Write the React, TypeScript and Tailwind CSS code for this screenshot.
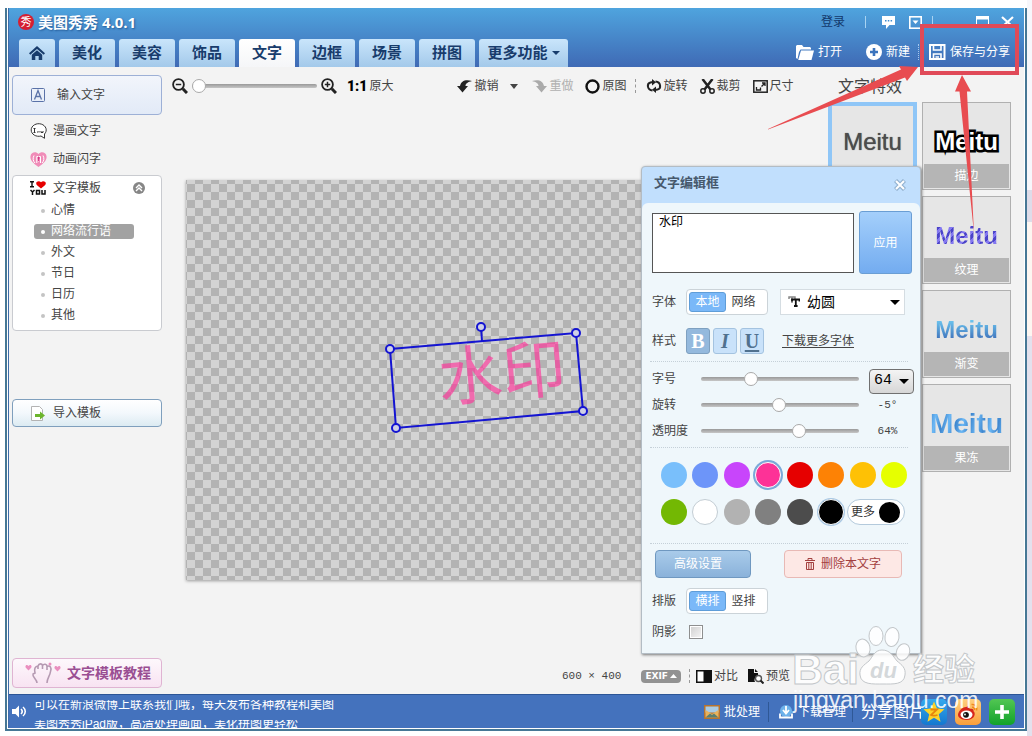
import React from "react";
import clsx from "clsx";

const tabs = ["美化", "美容", "饰品", "文字", "边框", "场景", "拼图"];
const templates = ["心情", "网络流行语", "外文", "节日", "日历", "其他"];

const swatches = [
  { name: "天蓝", cls: "bg-[#79bffb]" },
  { name: "蓝", cls: "bg-[#6d95f9]" },
  { name: "紫", cls: "bg-[#c845fb]" },
  { name: "粉", cls: "bg-[#fd3297] border border-white ring-2 ring-[#7aa9d8]" },
  { name: "红", cls: "bg-[#e60000]" },
  { name: "橙", cls: "bg-[#fd8205]" },
  { name: "琥珀", cls: "bg-[#fec105]" },
  { name: "黄", cls: "bg-[#e6ff00]" },
  { name: "绿", cls: "bg-[#73b803]" },
  { name: "白", cls: "bg-white border border-[#c3cdd4]" },
  { name: "浅灰", cls: "bg-[#b2b2b2]" },
  { name: "灰", cls: "bg-[#808080]" },
  { name: "深灰", cls: "bg-[#4c4c4c]" },
  { name: "黑", cls: "bg-black border border-white ring-1 ring-[#a9c8e4]" },
];

const effects = [
  {
    name: "描边",
    cls: "text-2xl font-bold text-white [-webkit-text-stroke:5px_#000] [paint-order:stroke_fill] [stroke-linejoin:round]",
  },
  {
    name: "纹理",
    cls: "text-2xl font-bold text-transparent bg-clip-text bg-[repeating-linear-gradient(135deg,#4b43c9_0px,#4b43c9_3px,#8377f0_3px,#8377f0_6px)]",
  },
  {
    name: "渐变",
    cls: "text-2xl font-bold text-transparent bg-clip-text bg-[linear-gradient(180deg,#6cc4ee_20%,#3f72bb_80%)]",
  },
  {
    name: "果冻",
    cls: "text-[28px] font-bold text-transparent bg-clip-text bg-[repeating-linear-gradient(100deg,#3f87cf_0px,#6cb8f5_7px,#3f87cf_14px)]",
  },
];

const rangeBase =
  "appearance-none bg-transparent h-4 [&::-webkit-slider-runnable-track]:h-1 [&::-webkit-slider-runnable-track]:rounded-full [&::-webkit-slider-runnable-track]:bg-[linear-gradient(#999,#c6c6c6)] [&::-webkit-slider-thumb]:appearance-none [&::-webkit-slider-thumb]:size-3.5 [&::-webkit-slider-thumb]:-mt-[5px] [&::-webkit-slider-thumb]:rounded-full [&::-webkit-slider-thumb]:bg-white [&::-webkit-slider-thumb]:border [&::-webkit-slider-thumb]:border-[#a9a9a9]";

function Magnifier({ plus }: { plus?: boolean }) {
  return (
    <svg width="16" height="16" viewBox="0 0 16 16" fill="none" stroke="#222">
      <circle cx="6.5" cy="6.5" r="5.4" strokeWidth="1.8" />
      <path d="M10.8 10.8 15 15" strokeWidth="3" />
      <path d={plus ? "M3.8 6.5h5.4M6.5 3.8v5.4" : "M3.8 6.5h5.4"} strokeWidth="1.5" />
    </svg>
  );
}

function Dots() {
  return <span className="h-3.5 border-l border-dashed border-[#999]" />;
}

function Header() {
  return (
    <header className="bg-[linear-gradient(#4fa4de,#3f6ab5)] text-white">
      <div className="flex h-7 items-center pl-[9px]">
        <svg width="16" height="16" viewBox="0 0 16 16">
          <circle cx="8" cy="8" r="8" fill="#d51f32" />
          <text x="8" y="12" fontSize="11" textAnchor="middle" fill="#fff">秀</text>
        </svg>
        <h1 className="ml-1 font-['Open_Sans','Noto_Sans_CJK_SC',sans-serif] text-[15px] leading-5 font-bold [text-shadow:1px_1px_2px_#245a96]">
          美图秀秀 4.0.1
        </h1>
        <div className="ml-auto flex items-center pr-2.5">
          <a href="#login" className="text-[#12386b]">登录</a>
          <span className="ml-5 h-3 w-px bg-[#a8d3f2]" />
          <button aria-label="消息" className="ml-4">
            <svg width="13" height="13" viewBox="0 0 13 13">
              <path d="M0 0h13v9H7.500L4 13V9H0z" fill="#fff" />
              <path d="M3 4h1.500v1.500H3zM5.800 4h1.500v1.500H5.800zM8.600 4h1.500v1.500H8.600z" fill="#3f8cce" />
            </svg>
          </button>
          <button aria-label="菜单" className="ml-3.5">
            <svg width="13" height="13" viewBox="0 0 13 13" fill="none" stroke="#fff" strokeWidth="1.6">
              <rect x=".8" y=".8" width="11.400" height="11.400" />
              <path d="M3.500 4.500h6L6.500 8z" fill="#fff" stroke="none" />
            </svg>
          </button>
          <span className="ml-2.5 h-3 w-px bg-[#a8d3f2]" />
          <button aria-label="最大化" className="ml-[43px]">
            <svg width="13" height="12" viewBox="0 0 13 12" fill="none" stroke="#fff">
              <rect x=".5" y=".5" width="12" height="11" />
              <path d="M0 2h13" strokeWidth="3" />
            </svg>
          </button>
          <button aria-label="关闭" className="ml-3">
            <svg width="13" height="12" viewBox="0 0 13 12" stroke="#fff" strokeWidth="2.200">
              <path d="M1 1l11 10M12 1L1 11" />
            </svg>
          </button>
        </div>
      </div>
      <div className="flex h-[31px] items-end pl-2.5">
        <nav className="flex gap-1 text-[15px] font-bold text-[#183c6c]">
          <button aria-label="首页" className="flex h-7 w-9 items-center justify-center rounded-t-[3px] bg-[linear-gradient(#c9e5fb,#a3c9ea)]">
            <svg width="16" height="15" viewBox="0 0 16 15" fill="#183c6c">
              <path d="M8 0l8 7.200-1.300 1.500L8 2.900 1.300 8.700 0 7.200z" />
              <path d="M8 4.200l5.200 4.500V14H9.700v-4H6.300v4H2.800V8.700z" />
            </svg>
          </button>
          {tabs.map((t) => (
            <button
              key={t}
              className={clsx(
                "h-7 w-14 rounded-t-[3px]",
                t === "文字" ? "bg-[linear-gradient(#fff,#f5f6f8)]" : "bg-[linear-gradient(#c9e5fb,#a3c9ea)]"
              )}
            >
              {t}
            </button>
          ))}
          <button className="flex h-7 w-[89px] items-center justify-center gap-1 rounded-t-[3px] bg-[linear-gradient(#c9e5fb,#a3c9ea)]">
            更多功能
            <svg width="8" height="4" viewBox="0 0 8 4"><path d="M0 0h8L4 4z" fill="#183c6c" /></svg>
          </button>
        </nav>
        <div className="ml-auto flex h-7 items-center self-start pt-1 pr-3.5">
          <button className="flex items-center gap-1">
            <svg width="18" height="15" viewBox="0 0 18 15" fill="#fff">
              <path d="M0 13V1l1-1h5l1.500 2H14l1 1v1.500H4.500L3 7 1.500 14z" />
              <path d="M5 5.500h13L15.500 15H2.200z" />
            </svg>
            打开
          </button>
          <button className="ml-6 flex items-center gap-1">
            <svg width="16" height="16" viewBox="0 0 16 16">
              <circle cx="8" cy="8" r="8" fill="#fff" />
              <path d="M8 4v8M4 8h8" stroke="#3b74bd" strokeWidth="2.600" />
            </svg>
            新建
          </button>
          <span className="ml-2 h-4 border-l border-dotted border-[#a8c8ee]" />
          <button className="ml-2.5 flex items-center gap-1">
            <svg width="17" height="16" viewBox="0 0 17 16" fill="none" stroke="#fff" strokeWidth="2">
              <path d="M1 1h14.500v14H1z" />
              <path d="M4.500 1v5h7.500V1M4.500 15v-5h7.500v5M6.500 13h3.500" strokeWidth="1.600" />
            </svg>
            保存与分享
          </button>
        </div>
      </div>
    </header>
  );
}

function Sidebar() {
  return (
    <aside className="flex w-[153px] shrink-0 flex-col pt-2 pb-1.5 pl-[3px]">
      <button className="flex h-10 items-center gap-3 rounded-sm border border-[#9db0d6] bg-[linear-gradient(#f2f5fb,#e2eaf7)] pl-[18px]">
        <svg width="14" height="14" viewBox="0 0 14 14" fill="none" stroke="#5a72a8">
          <rect x=".5" y=".5" width="13" height="13" rx="1" />
          <path d="M3.500 11.500L7 2.500l3.500 9M4.800 8.500h4.400" strokeWidth="1.300" />
        </svg>
        输入文字
      </button>
      <button className="mt-0.5 flex h-7 items-center gap-1.5 pl-[18px]">
        <svg width="17" height="16" viewBox="0 0 17 16" fill="none" stroke="#333">
          <path d="M14.500 11a7.500 6.300 0 1 0-3.500 2l3.500 2.300z" fill="#fff" />
          <path d="M3.500 5.500h2M4.500 5.500v4M3.500 9.500h2M7 9h1M9 8v1.500M11 8v1.500h2V8" />
        </svg>
        漫画文字
      </button>
      <button className="flex h-7 items-center gap-1.5 pl-[18px]">
        <svg width="17" height="15" viewBox="0 0 17 15">
          <path d="M8.500 15C2 10.500 0 7.500.5 4 1.200 0 6-.8 8.500 2 11-.8 15.800 0 16.500 4c.5 3.500-1.500 6.500-8 11z" fill="#f08cb8" />
          <path d="M4 3.500c-1.500 3-1 5.500 1 7.500M13 3.500c1.500 3 1 5.500-1 7.500M6.800 11V4.500h3.700V11M8.600 5.500v4" stroke="#fff" fill="none" />
          <path d="M7.700 6h2M8.600 4.500V9" stroke="#d42e80" fill="none" />
        </svg>
        动画闪字
      </button>
      <section className="mt-0.5 rounded-sm border border-[#c9cbd0] bg-white pb-1">
        <button className="flex h-6 w-full items-center pl-[17px]">
          <svg width="17" height="14" viewBox="0 0 17 14">
            <path d="M0 .7h4M2 .7v5M0 5.700h4" stroke="#111" strokeWidth="1.400" />
            <path d="M11 7.500C7.500 5 6 3.800 6.200 2 6.500 0 9.500-.6 11 1.200 12.500-.6 15.500 0 15.800 2c.2 1.800-1.300 3-4.800 5.500z" fill="#e60000" />
            <path d="M.5 9l2 2 2-2M2.500 11v3M6.500 9.500h3v3.500h-3zM12 9v4h3V9" stroke="#111" strokeWidth="1.500" fill="none" />
          </svg>
          <span className="ml-1.5">文字模板</span>
          <svg className="ml-8" width="12" height="12" viewBox="0 0 12 12">
            <circle cx="6" cy="6" r="6" fill="#868686" />
            <path d="M3 6l3-3 3 3M3 9l3-3 3 3" fill="none" stroke="#fff" strokeWidth="1.400" />
          </svg>
        </button>
        <ul>
          {templates.map((t, i) => (
            <li key={t} className="flex h-[21px] items-center pl-[21px]">
              <button
                className={clsx(
                  "flex h-[15px] w-[100px] items-center gap-1.5 rounded-[3px] pl-[7px] leading-[17px]",
                  i === 1 && "bg-[#a2a2a2] text-white"
                )}
              >
                <span className={clsx("size-1 rounded-full", i === 1 ? "bg-white" : "bg-[#c4c4c4]")} />
                {t}
              </button>
            </li>
          ))}
        </ul>
      </section>
      <button className="mt-[68px] flex h-7 items-center gap-2 rounded-sm border border-[#7f9fbd] bg-[linear-gradient(#fff,#f3f8fc_50%,#dcebf2)] pl-[18px]">
        <svg width="14" height="15" viewBox="0 0 14 15">
          <path d="M.5.5h8l3 3v11H.5z" fill="#fff" stroke="#b3b3b3" />
          <path d="M4 8h5V5.500l5 4-5 4V11H4z" fill="#6cb52d" />
        </svg>
        导入模板
      </button>
      <button className="mt-auto flex h-[30px] items-center rounded-sm border border-[#dfb4d2] bg-[linear-gradient(#fdf8fc,#f8e3f2)] pl-3 text-sm font-bold text-[#9a4f93]">
        <svg width="36" height="22" viewBox="0 0 36 22" fill="none">
          <path d="M3.500 8.500L.8 5.800C-.5 3.500 2 2 3.500 4 5 2 7.500 3.500 6.200 5.800z" fill="#ea8fbf" />
          <path d="M32.500 9.500l-2.700-2.700c-1.300-2.300 1.200-3.800 2.700-1.800 1.500-2 4-.5 2.700 1.800z" fill="#ea8fbf" />
          <circle cx="25" cy="2" r="1.500" fill="#ea8fbf" />
          <path d="M12 21c0-4-5-6-4-9l2-1c-1-4 0-7 3-7 1-3 4-2.500 4.500-.5C19 1.500 22 2 22 4.500c3-1.500 5 1 3.500 5C25 14 22 16 22 21M13 4v3M17.500 3.500V7M22 4.500V8" stroke="#b59ab2" strokeWidth="1.600" />
        </svg>
        <span className="ml-1.5">文字模板教程</span>
      </button>
    </aside>
  );
}

function Toolbar() {
  return (
    <div className="flex h-[38px] items-center pl-2.5 whitespace-nowrap">
      <button aria-label="缩小"><Magnifier /></button>
      <input type="range" aria-label="缩放" defaultValue={0} className={clsx(rangeBase, "ml-1 w-[125px]")} />
      <button aria-label="放大" className="ml-1"><Magnifier plus /></button>
      <button className="ml-2.5 flex items-center gap-0.5">
        <span className="font-['Roboto',sans-serif] text-sm font-black text-black">1:1</span>原大
      </button>
      <button className="ml-16 flex items-center gap-0.5">
        <svg width="15" height="13" viewBox="0 0 15 13" fill="#222">
          <path d="M15 1C9-1 4 .5 3 6H0l5.500 6.500L11 6H8.500C8.500 3.500 11 2 15 1z" />
        </svg>
        撤销
      </button>
      <button aria-label="撤销历史" className="ml-3">
        <svg width="8" height="5" viewBox="0 0 8 5"><path d="M0 0h8L4 5z" fill="#444" /></svg>
      </button>
      <button className="ml-3.5 flex items-center gap-0.5 text-[#b0b0b0]">
        <svg width="15" height="13" viewBox="0 0 15 13" fill="#aaa">
          <path d="M0 1c6-2 11-.5 12 5h3l-5.500 6.500L4 6h2.500C6.500 3.500 4 2 0 1z" />
        </svg>
        重做
      </button>
      <button className="ml-3 flex items-center gap-0.5">
        <svg width="15" height="15" viewBox="0 0 15 15"><circle cx="7.500" cy="7.500" r="6" fill="none" stroke="#111" strokeWidth="2.400" /></svg>
        原图
      </button>
      <span className="ml-2 flex"><Dots /></span>
      <button className="ml-2.5 flex items-center gap-0.5">
        <svg width="16" height="14" viewBox="0 0 16 14" fill="none" stroke="#222" strokeWidth="2">
          <path d="M6.500 11.500C1 11 .5 4.500 4.500 3.500L7 3M9.500 2.500C15 3 15.500 9.500 11.500 10.500L9 11" />
          <path d="M6 0v6.500l4-3.200zM10 7.500V14l-4-3.200z" fill="#222" stroke="none" />
        </svg>
        旋转
      </button>
      <button className="ml-3 flex items-center gap-0.5">
        <svg width="15" height="15" viewBox="0 0 15 15" fill="none" stroke="#222" strokeWidth="1.500">
          <circle cx="3" cy="12" r="2.200" /><circle cx="12" cy="12" r="2.200" />
          <path d="M2.500 0L10.500 10.500M12.500 0L4.500 10.500" strokeWidth="2.500" />
        </svg>
        裁剪
      </button>
      <button className="ml-3 flex items-center gap-0.5">
        <svg width="15" height="13" viewBox="0 0 15 13" fill="none" stroke="#222" strokeWidth="1.500">
          <rect x=".8" y=".8" width="13.400" height="11.400" />
          <path d="M8.500 6.500L12 3M9 3h3v3M3.500 7v3h4V7.500" strokeWidth="1.300" />
        </svg>
        尺寸
      </button>
    </div>
  );
}

function Workspace() {
  return (
    <section className="flex min-w-0 flex-1 flex-col">
      <Toolbar />
      <div className="relative mt-[75px] ml-6 h-[400px] w-[600px] bg-[conic-gradient(#d3d3d3_25%,#b3b3b3_0_50%,#d3d3d3_0_75%,#b3b3b3_0)] bg-[length:16px_16px] bg-[position:1px_4px] shadow-[0_1px_3px_#999]">
        <div className="absolute top-[146px] left-[252px] rotate-[-5deg] text-[64px] leading-[96px] text-[#ff3399]/65">水印</div>
        <svg className="absolute top-0 left-0" width="600" height="400" fill="none" stroke="#1414d2" strokeWidth="2">
          <path d="M204 169L390 153L397 231L210 248ZM296 161L295 147" />
          <g fill="#cfd0e6">
            <circle cx="204" cy="169" r="4" /><circle cx="390" cy="153" r="4" />
            <circle cx="397" cy="231" r="4" /><circle cx="210" cy="248" r="4" />
            <circle cx="295" cy="147" r="4" />
          </g>
        </svg>
      </div>
      <div className="mt-auto flex h-9 items-center justify-end pr-[38px] whitespace-nowrap">
        <span className="font-['Liberation_Mono',monospace] text-[11px]">600 × 400</span>
        <button className="ml-5 flex h-[13px] items-center gap-0.5 rounded-sm bg-[#929292] px-1 text-[9px] leading-[13px] font-bold text-white">
          <span className="font-['DejaVu_Sans',sans-serif]">EXIF</span>
          <svg width="7" height="4" viewBox="0 0 7 4"><path d="M0 4h7L3.500 0z" fill="#fff" /></svg>
        </button>
        <span className="ml-2 flex"><Dots /></span>
        <button className="ml-1.5 flex items-center gap-0.5">
          <svg width="16" height="13" viewBox="0 0 16 13"><path d="M0 0h16v13H0z" fill="#111" /><path d="M1.500 1.500h6v10h-6z" fill="#fff" /></svg>
          对比
        </button>
        <button className="ml-2.5 flex items-center gap-0.5">
          <svg width="16" height="15" viewBox="0 0 16 15">
            <path d="M0 0h6v4h4v3a4 4 0 0 0-3 6H0zM7 0l3 3H7z" fill="#111" />
            <circle cx="10.500" cy="9.500" r="3" fill="#fff" stroke="#555" strokeWidth="1.400" />
            <path d="M12.500 11.500L15.500 14.500" stroke="#222" strokeWidth="2" />
          </svg>
          预览
        </button>
      </div>
    </section>
  );
}

function EffectCards() {
  return (
    <aside className="w-[196px] shrink-0">
      <h2 className="flex h-9 items-center pt-1 pl-2.5 text-base leading-5 text-[#444]">文字特效</h2>
      <div className="mt-[-1px] grid w-[183px] grid-cols-2 gap-x-[5px] gap-y-1.5">
        <button className="h-[88px] border-4 border-[#8fc6f7] bg-[#e6e6e6] pt-5 pb-7 font-['Liberation_Sans',Arial,sans-serif] text-2xl leading-7 text-[#4c4c4c] [text-shadow:0_0_1px_#4c4c4c]">
          Meitu
        </button>
        {effects.map((e) => (
          <button key={e.name} className="col-start-2 flex h-[88px] flex-col border border-[#b0b0b0] bg-[#e6e6e6] p-px">
            <span className="flex flex-1 items-center justify-center self-stretch pt-4 font-['Liberation_Sans',Arial,sans-serif]">
              <span className={clsx(e.cls, "leading-8")}>Meitu</span>
            </span>
            <span className="h-6 self-stretch bg-[#b5b5b5] leading-6 text-white">{e.name}</span>
          </button>
        ))}
      </div>
    </aside>
  );
}

function Segmented({ a, b }: { a: string; b: string }) {
  return (
    <div className="flex h-[26px] w-[82px] items-center rounded-sm border border-[#cbd3d8] bg-white p-0.5">
      <button className="h-5 w-[37px] rounded-[3px] border border-[#5f9dd8] bg-[#7ab8f8] leading-[18px] text-white">{a}</button>
      <button className="h-5 flex-1 pr-1 text-[#444]">{b}</button>
    </div>
  );
}

function SliderRow({ id, label, value, children }: { id: string; label: string; value: number; children: React.ReactNode }) {
  return (
    <div className="flex h-[26px] items-center">
      <label htmlFor={id} className="w-[49px]">{label}</label>
      <input id={id} type="range" defaultValue={value} className={clsx(rangeBase, "w-[158px]")} />
      <div className="-mr-1 ml-2.5 flex w-[45px] shrink-0 justify-center pr-2 font-['Liberation_Mono',monospace] text-[11px]">{children}</div>
    </div>
  );
}

function TextDialog() {
  const line = "border-dotted border-[#c5d0d8] -ml-0.5 mr-1";
  const styleBtn =
    "h-[26px] w-6 rounded-[3px] border border-[#a4c3e0] bg-[#c9e2fa] font-['Liberation_Serif',serif] text-xl leading-6 font-bold text-[#50718f]";
  return (
    <div
      role="dialog"
      aria-label="文字编辑框"
      className="absolute top-[166px] left-[641px] w-[280px] rounded-t-sm border border-[#b3bcc4] bg-[#c1dffd] shadow-[1px_1px_3px_#777]"
    >
      <div className="flex h-9 items-center justify-between pr-3.5 pl-3">
        <h2 className="pb-1 text-[13px] font-bold text-[#46586c]">文字编辑框</h2>
        <button aria-label="关闭编辑框">
          <svg width="12" height="12" viewBox="0 0 12 12">
            <path d="M1.500 1.500l9 9M10.500 1.500l-9 9" stroke="#93b2d0" strokeWidth="4.400" />
            <path d="M2 2l8 8M10 2l-8 8" stroke="#fff" strokeWidth="2" />
          </svg>
        </button>
      </div>
      <div className="rounded-t-md bg-[#eff7fb] pt-2 pr-2 pb-[11px] pl-2.5">
        <div className="flex h-[63px] items-center gap-[5px]">
          <textarea aria-label="文字内容" defaultValue="水印" className="h-[60px] w-[202px] resize-none border border-[#555] bg-white px-1.5 text-xs leading-4 text-black" />
          <button className="h-full flex-1 rounded-[3px] border border-[#6a9ed4] bg-[linear-gradient(#a4cffb,#73acf0)] text-white">应用</button>
        </div>
        <div className="mt-3.5 flex h-7 items-center">
          <span className="w-[34px]">字体</span>
          <Segmented a="本地" b="网络" />
          <div className="relative ml-3">
            <svg className="absolute top-[7px] left-2" width="12" height="11" viewBox="0 0 12 11" fill="none">
              <path d="M1 3V1h6v2M4 1v6" stroke="#888" strokeWidth="1.500" />
              <path d="M4 5.500V3.500h7.500v2M7.800 3.500V10M6 10h3.600" stroke="#111" strokeWidth="1.800" />
            </svg>
            <select aria-label="字体名称" className="h-[26px] w-[125px] appearance-none border border-[#d5dde2] bg-white pl-[26px] text-sm leading-5 text-black">
              <option>幼圆</option>
            </select>
            <svg className="pointer-events-none absolute top-[11px] right-[5px]" width="10" height="5" viewBox="0 0 10 5"><path d="M0 0h10L5 5z" fill="#000" /></svg>
          </div>
        </div>
        <div className="mt-3 flex h-[26px] items-center">
          <span className="w-[34px]">样式</span>
          <div className="flex gap-[3px]">
            <button aria-pressed="true" className="h-[26px] w-6 rounded-[3px] border border-[#7ea0c0] bg-[#94b9dd] font-['Liberation_Serif',serif] text-xl leading-6 font-bold text-white">B</button>
            <button className={clsx(styleBtn, "italic")}>I</button>
            <button className={clsx(styleBtn, "underline underline-offset-2 decoration-2")}>U</button>
          </div>
          <a href="#fonts" className="ml-[18px] underline underline-offset-2">下载更多字体</a>
        </div>
        <hr className={clsx(line, "mt-[7px]")} />
        <div className="mt-1">
          <SliderRow id="size" label="字号" value={30}>
            <span className="relative pt-1 -mr-2">
              <select aria-label="字号数值" className="h-[25px] w-[45px] appearance-none rounded-sm border border-[#707070] bg-[linear-gradient(#f4f4f4,#d6d6d6)] pl-1 font-['Liberation_Mono',monospace] text-[15px] text-black">
                <option>64</option>
              </select>
              <svg className="pointer-events-none absolute top-3.5 right-[5px]" width="10" height="5" viewBox="0 0 10 5"><path d="M0 0h10L5 5z" fill="#000" /></svg>
            </span>
          </SliderRow>
          <SliderRow id="rotate" label="旋转" value={49}>-5°</SliderRow>
          <SliderRow id="alpha" label="透明度" value={63}>64%</SliderRow>
        </div>
        <hr className={clsx(line, "mt-[3px]")} />
        <div className="mt-3.5 mr-0.5 ml-1.5 grid grid-cols-8 justify-items-center gap-y-[11px]">
          {swatches.map((s) => (
            <button key={s.name} aria-label={s.name} className={clsx("size-[26px] rounded-full", s.cls)} />
          ))}
          <button className="col-span-2 flex h-[26px] w-[58px] items-center justify-between justify-self-start rounded-full border border-[#b4cadc] bg-white pr-1 pl-[3px] text-[#333]">
            更多
            <span className="size-[21px] rounded-full bg-black" />
          </button>
        </div>
        <hr className={clsx(line, "mt-[18px]")} />
        <div className="mt-1.5 mr-2.5 ml-[3px] flex h-7 items-center justify-between">
          <button className="h-7 w-24 rounded-sm border border-[#6f98c0] bg-[linear-gradient(#a9cbea,#8ab2da)] pr-2.5 text-white">高级设置</button>
          <button className="flex h-7 w-[118px] items-center justify-center gap-1.5 rounded-sm border border-[#e8b9b5] bg-[#fde8e5] text-[#a3403f]">
            <svg width="10" height="12" viewBox="0 0 10 12" fill="none" stroke="#a3403f">
              <path d="M0 2.500h10M3 2V.5h4V2M1.500 4.500v7h7v-7zM3.800 5v6M6.200 5v6" />
            </svg>
            删除本文字
          </button>
        </div>
        <div className="mt-2.5 flex h-[26px] items-center">
          <span className="w-[34px]">排版</span>
          <Segmented a="横排" b="竖排" />
        </div>
        <div className="mt-2 flex h-5 items-center">
          <label htmlFor="shadow" className="w-[37px]">阴影</label>
          <input id="shadow" type="checkbox" className="size-3.5 appearance-none border border-[#8e8f8f] bg-[linear-gradient(135deg,#cfcfcf,#f6f6f6)] ring-1 ring-white ring-inset" />
        </div>
      </div>
    </div>
  );
}

function Footer() {
  return (
    <footer className="flex h-[34px] items-center border-t border-[#2c5596] bg-[#4472bd] pl-[3px] text-white">
      <svg width="15" height="13" viewBox="0 0 15 13" fill="#fff">
        <path d="M0 4h3.500L7 .5v12L3.500 9H0z" />
        <path d="M9 4c1.500 1.500 1.500 3.500 0 5M11 2c3 2.500 3 6.500 0 9" fill="none" stroke="#fff" strokeWidth="1.600" />
      </svg>
      <div className="ml-[7px] flex flex-col gap-2.5 self-start pt-[5px]">
        <p className="flex h-2.5 items-center overflow-hidden leading-3">可以在新浪微博上联系我们哦，每天发布各种教程和美图</p>
        <p className="flex h-2 items-center overflow-hidden leading-3">美图秀秀iPad版，高清处理画面，美化拼图更轻松</p>
      </div>
      <div className="ml-auto flex items-center pr-[9px]">
        <button className="flex items-center gap-1">
          <svg width="16" height="14" viewBox="0 0 16 14">
            <path d="M0 0h16v14H0z" fill="#b8742e" />
            <path d="M1.500 1.500h13v6h-13z" fill="#a9cbe4" />
            <path d="M1.500 5l6.500 4 6.500-4v7.500h-13z" fill="#e9b25c" />
            <path d="M1.500 12.500L6 8.500l2 1.500 2-1.500 4.500 4z" fill="#5c7f70" />
          </svg>
          批处理
        </button>
        <span className="ml-2 h-5 w-px bg-[#2f5896]" />
        <button className="ml-2.5 flex items-center gap-[5px]">
          <svg width="14" height="14" viewBox="0 0 14 14">
            <circle cx="7" cy="6" r="6" fill="#6db2ea" />
            <path d="M7 1v6M4 5l3 3.500L10 5M1 8.500v4h12v-4" fill="none" stroke="#fff" strokeWidth="1.800" />
          </svg>
          下载管理
        </button>
        <span className="ml-1.5 h-5 w-px bg-[#2f5896]" />
        <span className="ml-2 w-[60px] overflow-hidden text-base leading-5 whitespace-nowrap">分享图片</span>
        <button aria-label="空间" className="flex size-[26px] items-center justify-center rounded-[5px] bg-[linear-gradient(#35a9ee,#1478cf)]">
          <svg width="22" height="22" viewBox="0 0 22 22">
            <path d="M11 .5l3 7 7.500.7-5.700 5 1.700 7.500L11 16.800l-6.500 3.900 1.700-7.500-5.700-5 7.500-.7z" fill="#fdd32a" />
            <path d="M7.500 8.500h6.500l-6 5.500c2 1 4 .8 6.500 0" fill="none" stroke="#e8860c" strokeWidth="1.800" />
          </svg>
        </button>
        <button aria-label="微博" className="ml-2 flex size-[26px] items-center justify-center rounded-[5px] bg-[linear-gradient(#ffcf7e,#f99f3c)]">
          <svg width="22" height="20" viewBox="0 0 22 20">
            <path d="M9 5c2.500-1.500 4 0 3.500 2 3-1 4.500.3 4 2.300C19 11 18 18 9.500 18 4 18 1 15.500 1 12.800 1 10 5 5 9 5z" fill="#d7261c" />
            <ellipse cx="9.500" cy="12.700" rx="6" ry="4.200" fill="#fff" />
            <circle cx="9" cy="12.800" r="2.900" fill="#111" />
            <circle cx="8" cy="12.500" r=".9" fill="#fff" />
            <path d="M14.500 2.500c4-.5 6 2.500 5 6M15 5.300c2-.2 2.800 1 2.300 2.700" fill="none" stroke="#f08a1c" strokeWidth="1.600" />
          </svg>
        </button>
        <button aria-label="更多分享" className="ml-2 flex size-[26px] items-center justify-center rounded-[5px] bg-[linear-gradient(#52c653,#12a22a)]">
          <svg width="14" height="14" viewBox="0 0 14 14"><path d="M7 0v14M0 7h14" stroke="#fff" strokeWidth="3.600" /></svg>
        </button>
      </div>
    </footer>
  );
}

function Overlays() {
  return (
    <div className="pointer-events-none absolute inset-0 overflow-hidden">
      <svg className="absolute top-0 left-0" width="1032" height="736" fill="#e84c50">
        <rect x="922" y="26" width="95" height="47" fill="none" stroke="#e04a58" strokeWidth="4" />
        <path d="M768 129L901 69.500 899 66 918 67 907 81 905 77.500 768 129.500z" />
        <path d="M962 75l9 16.500h-4l7 142-14.500-142H955z" />
      </svg>
      <svg
        className="absolute top-[620px] left-[780px]"
        width="220"
        height="100"
        fill="#fff"
        fillOpacity=".85"
        stroke="#c3c7ca"
        fontFamily="'Liberation Sans', 'Noto Sans CJK SC', sans-serif"
      >
        <g fontWeight="bold" strokeWidth="1">
          <text x="12" y="64" fontSize="43">Bai</text>
          <ellipse cx="83" cy="28" rx="7" ry="9" transform="rotate(-12 83 28)" />
          <ellipse cx="96" cy="16" rx="7" ry="9.500" />
          <ellipse cx="112" cy="17" rx="7" ry="9.500" transform="rotate(8 112 17)" />
          <ellipse cx="123" cy="32" rx="6.500" ry="8.500" transform="rotate(20 123 32)" />
          <path d="M102 30c8 0 11 6 15 11 5 4 9 7 8 14-1 10-12 9-22 9s-22 1-23-9c-1-7 4-10 9-14 4-5 6-11 13-11z" />
          <text x="90" y="58" fontSize="22" fill="#cdd1d4" stroke="none" fontStyle="italic">du</text>
          <text x="133" y="60" fontSize="31">经验</text>
        </g>
        <text x="13" y="88" fontSize="23" fillOpacity=".9" stroke="none">jingyan.baidu.com</text>
      </svg>
    </div>
  );
}

export default function App() {
  return (
    <div className="relative flex min-h-screen flex-col bg-[linear-gradient(#f7f7fb_190px,#dedce9_190px_222px,#fdf6f1_222px_336px,#e3e1ed_336px)] px-[5px] pt-2 pb-[5px] font-['Liberation_Sans','Noto_Sans_CJK_SC',sans-serif] text-xs leading-4 text-[#444] before:absolute before:inset-y-0 before:right-[5px] before:left-0 before:bg-white">
      <div className="relative flex flex-1 flex-col border-2 border-t-0 border-[#467795] bg-white px-px pb-px">
        <div className="flex flex-1 flex-col border-l border-[#3f6ca8]">
          <Header />
          <main className="flex flex-1 bg-[#f3f3f3]">
            <Sidebar />
            <Workspace />
            <EffectCards />
          </main>
          <Footer />
        </div>
      </div>
      <TextDialog />
      <Overlays />
    </div>
  );
}
